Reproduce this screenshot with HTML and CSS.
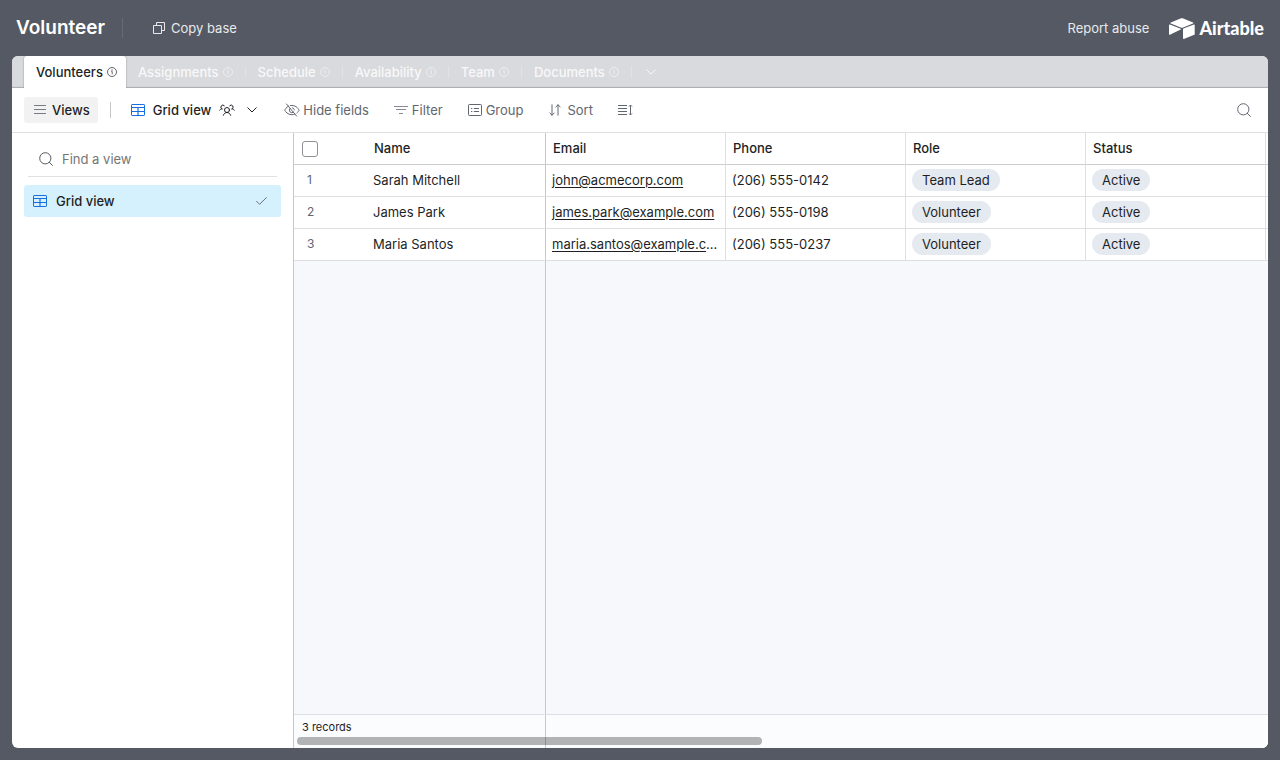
FILE: index.html
```html
<!DOCTYPE html>
<html lang="en">
<head>
<meta charset="utf-8">
<title>Volunteer - Airtable</title>
<link rel="stylesheet" href="styles.css">
</head>
<body>
<svg class="sprite" aria-hidden="true">
  <symbol id="info" viewBox="0 0 10 10"><circle cx="5" cy="5" r="4.5" fill="none" stroke="currentColor" stroke-width=".8"/><path d="M4.300 4.500H5.200V7.300" fill="none" stroke="currentColor" stroke-width=".8"/><circle cx="5" cy="2.900" r=".6" fill="currentColor"/></symbol>
  <symbol id="grid" viewBox="0 0 14 12"><path d="M7 4v7.500" stroke="#166ee1" stroke-width="1.200"/><rect x=".5" y=".5" width="13" height="11" rx=".6" fill="none" stroke="#166ee1"/><path d="M.5 3.500h13M.5 7.500h13" stroke="#166ee1"/></symbol>
  <symbol id="search" viewBox="0 0 14 14"><circle cx="6.300" cy="6.300" r="5.600" fill="none" stroke="currentColor"/><path d="M10.300 10.300l3.100 3.100" stroke="currentColor" stroke-linecap="round"/></symbol>
  <symbol id="chevron" viewBox="0 0 10 6"><path d="M.8.8L5 5 9.200.8" fill="none" stroke="currentColor" stroke-linecap="round" stroke-linejoin="round"/></symbol>
</svg>
<header class="topbar">
  <h1 class="base-name">Volunteer</h1>
  <span class="top-divider"></span>
  <button class="top-button" type="button">
    <svg width="12" height="12" viewBox="0 0 12 12" fill="none" stroke="currentColor"><path d="M3.500 3.500V.5h8v8h-3"/><path d="M.5 3.500h8v8h-8z"/></svg>
    Copy base
  </button>
  <a class="report" href="#">Report abuse</a>
  <a class="brand" href="#" aria-label="Airtable">
    <svg width="26" height="21" viewBox="0 0 26 21" fill="#fff"><path d="M11.500.6L1.800 4.600c-.6.200-.6.800 0 1l9.800 3.900c.9.300 1.700.3 2.600 0L24 5.600c.5-.2.500-.8 0-1L14.300.6c-.9-.4-1.900-.4-2.800 0z"/><path d="M14 11.200v9.100c0 .4.400.7.800.6l10.500-4.100c.2-.1.400-.3.400-.6V7.100c0-.4-.4-.7-.8-.6L14.400 10.600c-.2.100-.4.300-.4.600z"/><path d="M11.700 11.600L8.600 13.100.9 16.800c-.4.200-.9-.1-.9-.5V7.200c0-.5.500-.8.900-.6l10.800 4.200c.4.200.4.600 0 .8z"/></svg>
    <span>Airtable</span>
  </a>
</header>
<main class="app">
  <nav class="tabs" aria-label="Tables">
    <button class="tab active" type="button">Volunteers<svg class="info"><use href="#info"/></svg></button>
    <button class="tab" type="button">Assignments<svg class="info"><use href="#info"/></svg></button>
    <button class="tab" type="button">Schedule<svg class="info"><use href="#info"/></svg></button>
    <button class="tab" type="button">Availability<svg class="info"><use href="#info"/></svg></button>
    <button class="tab" type="button">Team<svg class="info"><use href="#info"/></svg></button>
    <button class="tab" type="button">Documents<svg class="info"><use href="#info"/></svg></button>
    <button class="tab-more" type="button" aria-label="All tables"><svg width="10" height="6"><use href="#chevron"/></svg></button>
  </nav>
  <div class="toolbar">
    <button class="views" type="button"><svg width="12" height="12" viewBox="0 0 12 12" stroke="#777b83"><path d="M0 1.500h12M0 5.500h12M0 9.500h12"/></svg>Views</button>
    <span class="tool-divider"></span>
    <button class="view-name" type="button">
      <svg width="14" height="12"><use href="#grid"/></svg>
      <span class="view-label">Grid view</span>
      <svg width="16" height="12" viewBox="0 0 16 12" fill="none" stroke="currentColor" stroke-linecap="round" stroke-linejoin="round"><circle cx="8" cy="6" r="2.500"/><path d="M4.300 11.300C5 9.500 6.300 8.500 8 8.500s3 1 3.700 2.800"/><path d="M5.300 1.700A2 2 0 1 0 3 4.900M3 4.900C1.900 4.900 1.100 5.400.6 6.200"/><path d="M10.700 1.700A2 2 0 1 1 13 4.900M13 4.900c1.100 0 1.900.5 2.400 1.300"/></svg>
      <svg class="view-chevron" width="10" height="6"><use href="#chevron"/></svg>
    </button>
    <button class="tool hide" type="button"><svg width="16" height="14" viewBox="0 0 16 14" fill="none" stroke="currentColor" stroke-linecap="round"><path d="M2.500 1l10 12"/><path d="M4.500 3C2.300 4.200 1 6.700.7 7.200c.8 1.500 3 4.500 7.100 4.500 1.200 0 2.200-.3 3.100-.7M6.500 2.500C11.500 1.900 14 5 15.100 7.200c-.4.800-1.100 1.900-2.200 2.800"/><path d="M6.200 5.300a2.500 2.500 0 0 0 3.300 3.800M8.300 4.800c1.100.2 1.900 1.100 2 2.100"/></svg>Hide fields</button>
    <button class="tool" type="button"><svg width="14" height="10" viewBox="0 0 14 10" stroke="#858992"><path d="M0 1.500h14M2 4.500h10M5 8.500h4"/></svg>Filter</button>
    <button class="tool" type="button"><svg width="14" height="12" viewBox="0 0 14 12" fill="none" stroke="currentColor"><rect x=".5" y=".5" width="13" height="11" rx=".8"/><path d="M3 4.500h1.300M5.800 4.500H11M3 7.500h1.300M5.800 7.500H11"/></svg>Group</button>
    <button class="tool sort" type="button"><svg width="12" height="12" viewBox="0 0 12 12" fill="none" stroke="currentColor" stroke-linecap="round" stroke-linejoin="round"><path d="M3 .8v10.400M.8 9L3 11.200 5.200 9M9 11.200V.8M6.800 3L9 .8 11.200 3"/></svg>Sort</button>
    <button class="tool" type="button" aria-label="Row height"><svg width="15" height="12" viewBox="0 0 15 12" fill="none" stroke="currentColor"><path d="M0 1.500h9M0 4.500h9M0 7.500h9M0 10.500h9M12.500 1v10M11 2.500L12.500 1 14 2.500M11 9.500l1.500 1.500L14 9.500"/></svg></button>
    <button class="tool find" type="button" aria-label="Search"><svg width="14" height="14"><use href="#search"/></svg></button>
  </div>
  <div class="content">
    <aside class="sidebar">
      <label class="view-search"><svg width="14" height="14"><use href="#search"/></svg><input type="text" placeholder="Find a view" aria-label="Find a view"></label>
      <button class="view-item" type="button"><svg width="14" height="12"><use href="#grid"/></svg><span>Grid view</span><svg width="11" height="8" viewBox="0 0 11 8" fill="none" stroke="#6b737b" stroke-linecap="round"><path d="M.6 4.300L3.600 7.300 10.400.6"/></svg></button>
    </aside>
    <section class="grid">
      <table class="records">
        <colgroup><col class="c-num"><col class="c-name"><col class="c-field"><col class="c-field"><col class="c-field"><col class="c-field"><col></colgroup>
        <thead><tr><th class="select"><input type="checkbox" aria-label="Select all"></th><th class="frozen">Name</th><th>Email</th><th>Phone</th><th>Role</th><th>Status</th><th class="rest"></th></tr></thead>
        <tbody>
          <tr><td class="num">1</td><td class="frozen">Sarah Mitchell</td><td><a href="#">john@acmecorp.com</a></td><td>(206) 555-0142</td><td><span class="pill">Team Lead</span></td><td><span class="pill">Active</span></td><td class="rest"></td></tr>
          <tr><td class="num">2</td><td class="frozen">James Park</td><td><a href="#">james.park@example.com</a></td><td>(206) 555-0198</td><td><span class="pill">Volunteer</span></td><td><span class="pill">Active</span></td><td class="rest"></td></tr>
          <tr><td class="num">3</td><td class="frozen">Maria Santos</td><td><a href="#">maria.santos@example.com</a></td><td>(206) 555-0237</td><td><span class="pill">Volunteer</span></td><td><span class="pill">Active</span></td><td class="rest"></td></tr>
        </tbody>
      </table>
      <div class="blank"><div class="pane"></div></div>
      <footer class="summary"><div class="pane">3 records</div><div class="scrollbar"></div></footer>
    </section>
  </div>
</main>
</body>
</html>
```
FILE: styles.css
```css
* { box-sizing: border-box; }
body {
  margin: 0;
  height: 100vh;
  padding: 0 12px 12px;
  display: flex;
  flex-direction: column;
  background: #545964;
  color: #1d1f25;
  font: 400 13px/18px Inter, "Liberation Sans", sans-serif;
}
button, input { font: inherit; color: inherit; }
button { display: flex; align-items: center; margin: 0; padding: 0; border: 0; background: none; white-space: nowrap; }
svg { flex: none; display: block; }
.sprite { position: absolute; width: 0; height: 0; }

.topbar { flex: none; height: 56px; padding: 0 4px; display: flex; align-items: center; color: #e8e9eb; }
.base-name { margin: 0; color: #fff; font-size: 19px; line-height: 28px; font-weight: 600; }
.top-divider { width: 1px; height: 20px; margin: 0 30px 0 17px; background: #656a74; }
.top-button { gap: 6px; }
.report { margin-left: auto; color: inherit; text-decoration: none; }
.brand { display: flex; align-items: center; gap: 4px; margin-left: 20px; color: #fff; font: 900 18px/20px Lato, sans-serif; text-decoration: none; }

.app { flex: 1; min-height: 0; display: flex; flex-direction: column; overflow: hidden; border-radius: 6px; background: #fff; }
.tabs { flex: none; height: 32px; padding-left: 12px; display: flex; background: #d9dadd; box-shadow: inset 0 -2px 1px -1px #a9aab0; }
.tab { position: relative; gap: 4px; padding: 0 12px; color: #f8f8f9; font-weight: 500; border-right: 1px solid transparent; }
.tab:not(.active)::after { content: ""; position: absolute; right: -1px; top: 10px; width: 1px; height: 12px; background: #e1e2e5; }
.tab.active { padding-right: 9px; border: 0; border-radius: 3px 3px 0 0; background: #fff; color: #1d1f25; box-shadow: 0 0 2px #888b92; clip-path: inset(-2px -2px 0 -2px); }
.info { width: 10px; height: 10px; opacity: .85; }
.tab-more { padding: 0 14px; color: #f8f8f9; }

.toolbar { flex: none; height: 45px; padding: 0 12px; display: flex; align-items: center; border-bottom: 1px solid #e0e1e3; }
.views { height: 26px; gap: 6px; padding: 0 8px 0 10px; border-radius: 3px; background: #f2f2f2; font-weight: 500; }
.tool-divider { width: 1px; height: 16px; margin: 0 20px 0 12px; background: #c5c6c9; }
.view-name { font-weight: 500; }
.view-label { margin: 0 8px; }
.view-chevron { margin-left: 12px; }
.tool { gap: 4px; margin-left: 25px; color: #616670; }
.tool.hide { margin-left: 27px; gap: 3px; }
.tool.sort { margin-left: 26px; gap: 6px; }
.tool.find { margin-left: auto; margin-right: 5px; }

.content { flex: 1; min-height: 0; display: flex; }
.sidebar { flex: none; width: 282px; padding: 10px 12px; border-right: 1px solid #c5c7cb; }
.view-search { display: flex; align-items: center; gap: 9px; height: 34px; margin: 0 4px 8px; padding: 0 11px 2px; border-bottom: 1px solid #e0e1e3; color: #55585e; }
.view-search input { flex: 1; min-width: 0; padding: 0; border: 0; outline: 0; background: none; }
.view-search input::placeholder { color: #757575; opacity: 1; }
.view-item { width: 100%; height: 32px; gap: 9px; padding: 0 14px 0 9px; border-radius: 3px; background: #d6f1fe; font-weight: 500; }
.view-item span { flex: 1; text-align: left; }

.grid { flex: 1; min-width: 0; display: flex; flex-direction: column; background: #f7f8fc; overflow: hidden; }
.records { width: 100%; table-layout: fixed; border-collapse: separate; border-spacing: 0; background: #fff; }
.c-num { width: 72px; }
.c-name, .c-field { width: 180px; }
.records th, .records td { height: 32px; padding: 0 6px 2px; border-right: 1px solid #dddfe3; border-bottom: 1px solid #dddfe3; text-align: left; white-space: nowrap; overflow: hidden; text-overflow: ellipsis; }
.records th { padding-left: 7px; border-bottom-color: #cbcdd1; font-weight: 500; }
.records th.frozen { padding-left: 8px; }
.records td.frozen { padding-left: 7px; }
.records .frozen { border-right-color: #c5c7cb; }
.records .select, .records .num { border-right: 0; }
.records .num { padding-left: 13px; color: #616670; font-size: 12px; }
.records .select { padding: 0 0 0 8px; }
.records .rest { padding: 0; border-right: 0; }
.records a { color: inherit; text-underline-offset: 2px; }
.select input { appearance: none; display: block; width: 16px; height: 16px; margin: 0; border: 1px solid #8f9196; border-radius: 3px; background: #fff; }
.pill { display: inline-block; height: 22px; padding: 0 10px; border-radius: 11px; background: #e5e9f0; line-height: 22px; vertical-align: middle; }
.blank { flex: 1; display: flex; }
.pane { width: 252px; border-right: 1px solid #c5c7cb; }
.summary { position: relative; flex: none; display: flex; height: 34px; border-top: 1px solid #dddfe3; background: #fbfcfe; font-size: 11px; line-height: 16px; }
.summary .pane { padding: 4px 8px; }
.scrollbar { position: absolute; left: 3px; bottom: 3px; width: 47.75%; height: 8px; border-radius: 4px; background: rgba(0, 0, 0, .29); }
```
